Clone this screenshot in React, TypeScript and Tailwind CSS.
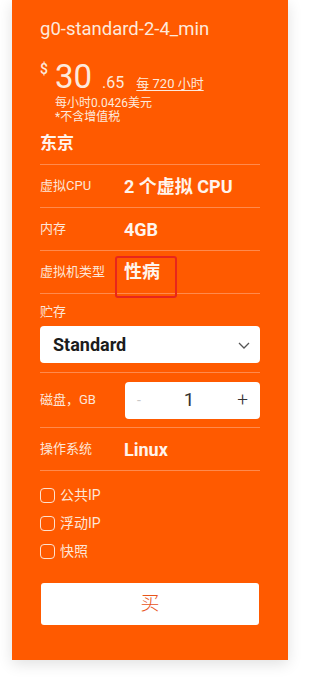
import React from "react";

const Row = ({ label, value, boxed }: { label: string; value: string; boxed?: boolean }) => (
  <div className="flex items-center h-[43px] border-b border-[#ff8a4d]">
    <div className="w-[84px] text-[13px] text-[#fde6d8]">{label}</div>
    {boxed ? (
      <div className="relative leading-[24px]">
        <span className="text-[18px] font-bold text-[#fff4ec]">{value}</span>
        <div className="absolute left-[-9px] top-[-4px] w-[62px] h-[42px] border-2 border-[#e8261c] rounded-[3px]" />
      </div>
    ) : (
      <div className="text-[18px] font-bold text-[#fff4ec]">{value}</div>
    )}
  </div>
);

const Check = ({ label }: { label: string }) => (
  <label className="flex items-center gap-[5px] h-[28px]">
    <span className="w-[15px] h-[15px] rounded-[4px] border border-[#fde1cf]" />
    <span className="text-[14px] text-[#fde6d8]">{label}</span>
  </label>
);

export default function App() {
  return (
    <div className="min-h-[696px] bg-white font-['Roboto','Noto_Sans_CJK_SC',sans-serif]">
      <div className="ml-[12px] w-[276px] h-[660px] bg-[#ff5a00] px-[28px] shadow-[0_4px_14px_rgba(0,0,0,0.12)]">
        <div className="pt-[16px] text-[18.5px] leading-[26px] text-[#fde9dc]">g0-standard-2-4_min</div>
        <div className="flex items-start mt-[20px] text-[#fde9dc]">
          <span className="text-[14px] leading-[14px] w-[15px] font-medium">$</span>
          <div>
            <div className="flex items-baseline">
              <span className="text-[33px] leading-[30px]">30</span>
              <span className="ml-[10px] text-[16px]">.65</span>
              <span className="ml-[12px] text-[13px] underline underline-offset-2">每 720 小时</span>
            </div>
            <div className="text-[12px] leading-[14px] mt-[1px]">每小时0.0426美元</div>
            <div className="text-[12px] leading-[14px]">*不含增值税</div>
          </div>
        </div>
        <div className="h-[41px] flex items-center border-b border-[#ff8a4d] text-[17px] font-bold text-[#fff4ec]">东京</div>
        <Row label="虚拟CPU" value="2 个虚拟 CPU" />
        <Row label="内存" value="4GB" />
        <Row label="虚拟机类型" value="性病" boxed />
        <div className="pt-[10px] pb-[9px] border-b border-[#ff8a4d]">
          <div className="text-[13px] leading-[16px] text-[#fde6d8]">贮存</div>
          <div className="mt-[6px] h-[37px] bg-white rounded-[4px] flex items-center justify-between pl-[13px] pr-[8px]">
            <span className="text-[18px] font-bold text-[#1c1c1c]">Standard</span>
            <svg width="16" height="16" viewBox="0 0 16 16" fill="none" stroke="#555" strokeWidth="1.3">
              <path d="M3 6l5 5 5-5" />
            </svg>
          </div>
        </div>
        <div className="flex items-center h-[55px] border-b border-[#ff8a4d]">
          <div className="w-[85px] text-[13px] text-[#fde6d8]">磁盘，GB</div>
          <div className="flex-1 h-[37px] bg-white rounded-[4px] flex items-center justify-between px-[12px]">
            <span className="text-[14px] text-[#c8c8c8]">-</span>
            <span className="text-[19px] text-[#333]">1</span>
            <span className="text-[19px] text-[#333] font-light">+</span>
          </div>
        </div>
        <Row label="操作系统" value="Linux" />
        <div className="pt-[10px]">
          <Check label="公共IP" />
          <Check label="浮动IP" />
          <Check label="快照" />
        </div>
        <div className="mt-[18px] mx-[1px] h-[42px] bg-white rounded-[3px] flex items-center justify-center text-[19px] text-[#e8541a] font-light">
          买
        </div>
      </div>
    </div>
  );
}
